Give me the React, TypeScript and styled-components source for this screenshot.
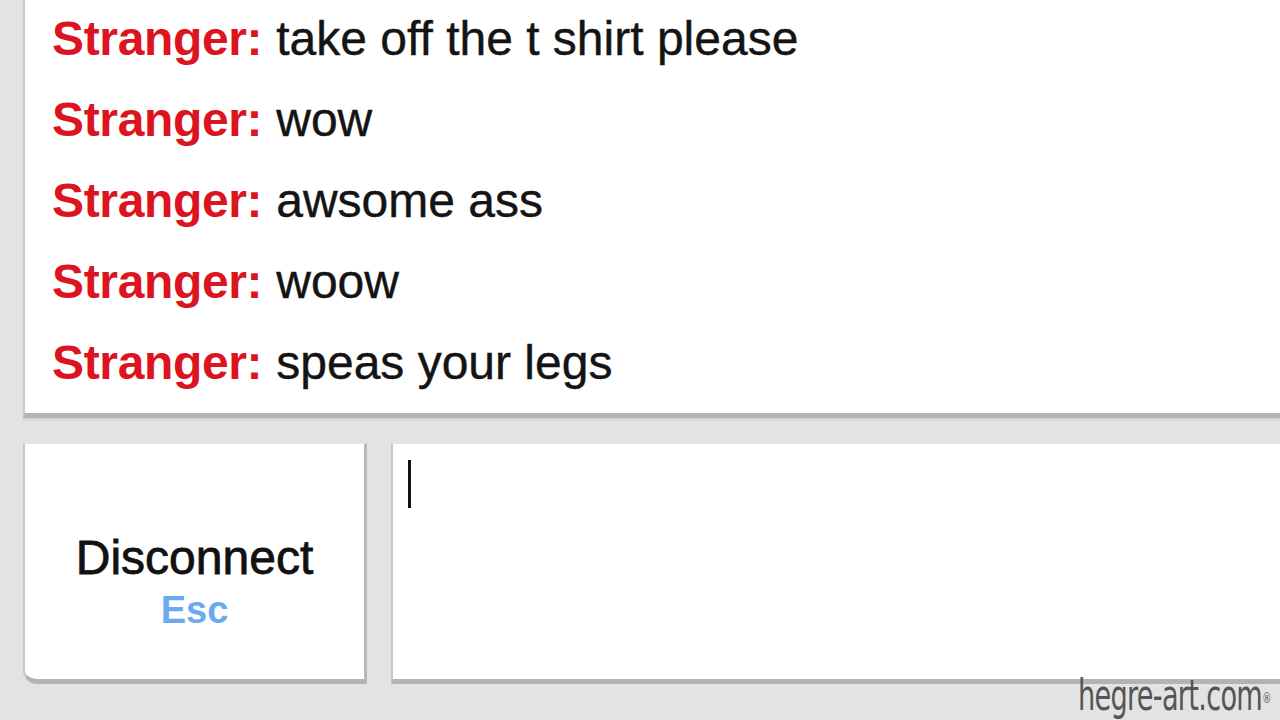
import React from "react";
import styled, { createGlobalStyle } from "styled-components";

const Global = createGlobalStyle`
  html, body { margin: 0; padding: 0; background: #e3e3e3; overflow: hidden; }
  * { box-sizing: border-box; }
`;

const Page = styled.div`
  position: relative;
  width: 1280px;
  height: 720px;
  overflow: hidden;
  background: #e3e3e3;
  font-family: "Liberation Sans", Arial, sans-serif;
  display: flex;
  flex-direction: column;
  padding-left: 23px;
`;

const ChatLog = styled.div`
  width: 1300px;
  height: 418px;
  flex-shrink: 0;
  background: #ffffff;
  border-left: 2px solid #c9c9c9;
  border-bottom: 5px solid #b3b3b3;
  box-shadow: 0 2px 2px rgba(0, 0, 0, 0.08);
  display: flex;
  flex-direction: column;
  justify-content: flex-end;
  padding: 0 0 10px 27px;
`;

const Line = styled.div`
  font-size: 48px;
  line-height: 81px;
  color: #141414;
  white-space: nowrap;
  -webkit-text-stroke: 0.4px #141414;
`;

const Who = styled.strong`
  color: #dc1420;
  font-weight: bold;
  margin-right: 14px;
  letter-spacing: -0.35px;
  -webkit-text-stroke: 0;
`;

const BottomRow = styled.div`
  display: flex;
  gap: 24px;
  margin-top: 25px;
  height: 241px;
  flex-shrink: 0;
`;

const DisconnectBtn = styled.div`
  width: 344px;
  flex-shrink: 0;
  background: #ffffff;
  border-left: 2px solid #c9c9c9;
  border-right: 3px solid #b8b8b8;
  border-top: 1px solid #e6e6e6;
  border-bottom: 5px solid #b3b3b3;
  border-bottom-left-radius: 14px;
  display: flex;
  flex-direction: column;
  align-items: center;
  justify-content: center;
  padding-top: 40px;
`;

const BtnLabel = styled.div`
  font-size: 48px;
  line-height: 50px;
  color: #111;
  -webkit-text-stroke: 0.8px #111;
`;

const BtnHint = styled.div`
  font-size: 38px;
  line-height: 42px;
  font-weight: bold;
  color: #6aaaf0;
  margin-top: 6px;
`;

const InputBox = styled.div`
  width: 900px;
  flex-shrink: 0;
  background: #ffffff;
  border-left: 2px solid #c9c9c9;
  border-top: 1px solid #e6e6e6;
  border-bottom: 5px solid #b3b3b3;
  padding: 16px 0 0 15px;
`;

const Caret = styled.div`
  width: 3px;
  height: 48px;
  background: #111;
`;

const Watermark = styled.div`
  position: absolute;
  right: 10px;
  bottom: 3px;
  font-family: "Liberation Sans Narrow", "DejaVu Sans Condensed", sans-serif;
  font-size: 42px;
  line-height: 42px;
  color: #555;
  transform: scaleX(0.72);
  transform-origin: right bottom;
  letter-spacing: -1px;
`;

const Reg = styled.sup`
  font-size: 14px;
  vertical-align: top;
  position: relative;
  top: 2px;
`;

const messages = [
  "take off the t shirt please",
  "wow",
  "awsome ass",
  "woow",
  "speas your legs",
];

export default function App() {
  return (
    <Page>
      <Global />
      <ChatLog>
        {messages.map((m, i) => (
          <Line key={i}>
            <Who>Stranger:</Who>
            {m}
          </Line>
        ))}
      </ChatLog>
      <BottomRow>
        <DisconnectBtn>
          <BtnLabel>Disconnect</BtnLabel>
          <BtnHint>Esc</BtnHint>
        </DisconnectBtn>
        <InputBox>
          <Caret />
        </InputBox>
      </BottomRow>
      <Watermark>
        hegre-art.com<Reg>®</Reg>
      </Watermark>
    </Page>
  );
}
